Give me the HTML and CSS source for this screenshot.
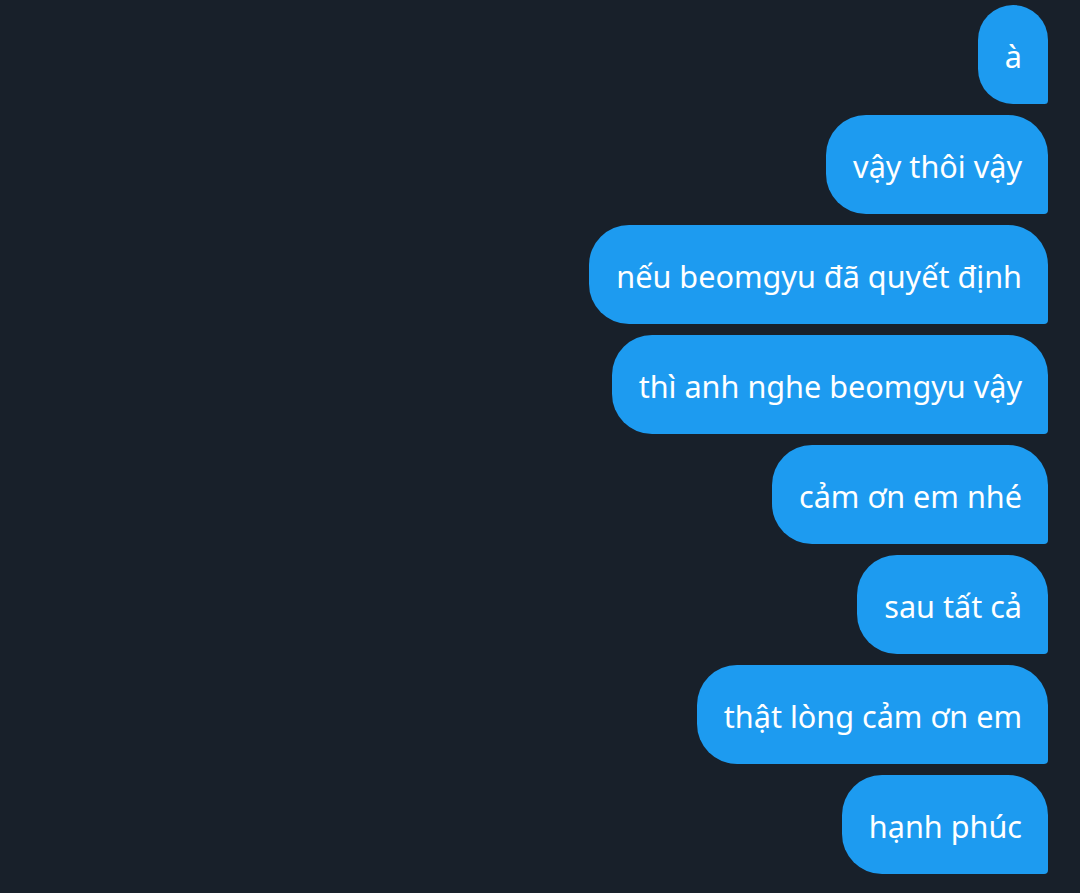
FILE: index.html
```html
<html><head><meta charset="utf-8"><link rel="stylesheet" href="styles.css"></head><body><div class="chat">
  <div class="msg">à</div>
  <div class="msg">vậy thôi vậy</div>
  <div class="msg">nếu beomgyu đã quyết định</div>
  <div class="msg">thì anh nghe beomgyu vậy</div>
  <div class="msg">cảm ơn em nhé</div>
  <div class="msg">sau tất cả</div>
  <div class="msg">thật lòng cảm ơn em</div>
  <div class="msg">hạnh phúc</div>
</div>
</body></html>
```

FILE: styles.css
```css
html, body{margin:0;padding:0;background:#18202a;}
.chat{display:flex;flex-direction:column;align-items:flex-end;gap:11px;padding:5px 32px 0 0;font-family:"Noto Sans", sans-serif;}
.msg{background:#1d9bf0;color:#fff;font-size:30.6px;line-height:40px;padding:31px 26px 28px 27px;border-radius:40px 40px 4px 40px;white-space:nowrap;}
```
